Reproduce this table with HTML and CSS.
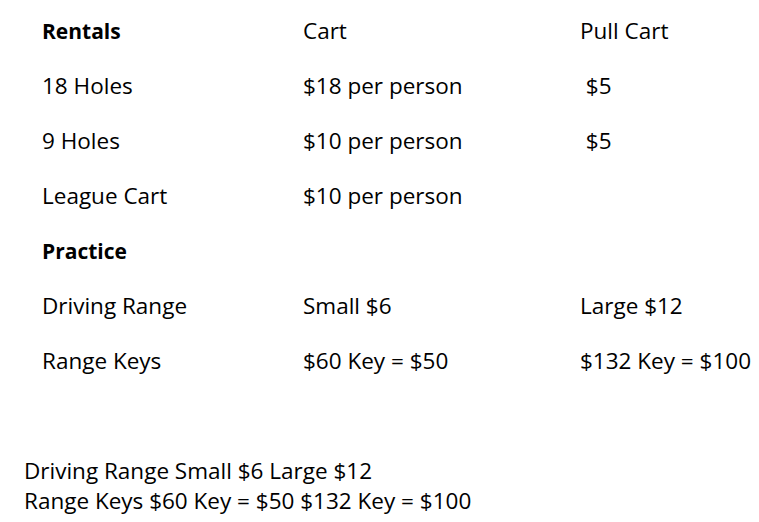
FILE: index.html
```html
<!DOCTYPE html>
<html>
<head>
<meta charset="utf-8">
<link rel="stylesheet" href="styles.css">
</head>
<body>
<div class="page">
  <div class="rates">
    <div class="cell head">Rentals</div><div class="cell">Cart</div><div class="cell">Pull Cart</div>
    <div class="cell">18 Holes</div><div class="cell">$18 per person</div><div class="cell">&nbsp;$5</div>
    <div class="cell">9 Holes</div><div class="cell">$10 per person</div><div class="cell">&nbsp;$5</div>
    <div class="cell">League Cart</div><div class="cell">$10 per person</div><div class="cell"></div>
    <div class="cell head">Practice</div><div class="cell"></div><div class="cell"></div>
    <div class="cell">Driving Range</div><div class="cell">Small $6</div><div class="cell">Large $12</div>
    <div class="cell">Range Keys</div><div class="cell">$60 Key = $50</div><div class="cell">$132 Key = $100</div>
  </div>
  <div class="summary">
    <p>Driving Range Small $6 Large $12</p>
    <p>Range Keys $60 Key = $50 $132 Key = $100</p>
  </div>
</div>
</body>
</html>
```
FILE: styles.css
```css
html, body { margin: 0; padding: 0; background: #fff; }
body {
  font-family: "Open Sans", "Noto Sans", sans-serif;
  font-size: 22.5px;
  color: #000;
}
.page { padding: 3px 0 0 24px; }
.rates {
  display: grid;
  grid-template-columns: 261px 277px auto;
  grid-auto-rows: 55px;
  padding-left: 18px;
}
.cell { display: flex; align-items: center; white-space: nowrap; }
.head { font-weight: 700; font-size: 21px; }
.summary { margin-top: 68px; }
.summary p { margin: 0; line-height: 30px; }
```
